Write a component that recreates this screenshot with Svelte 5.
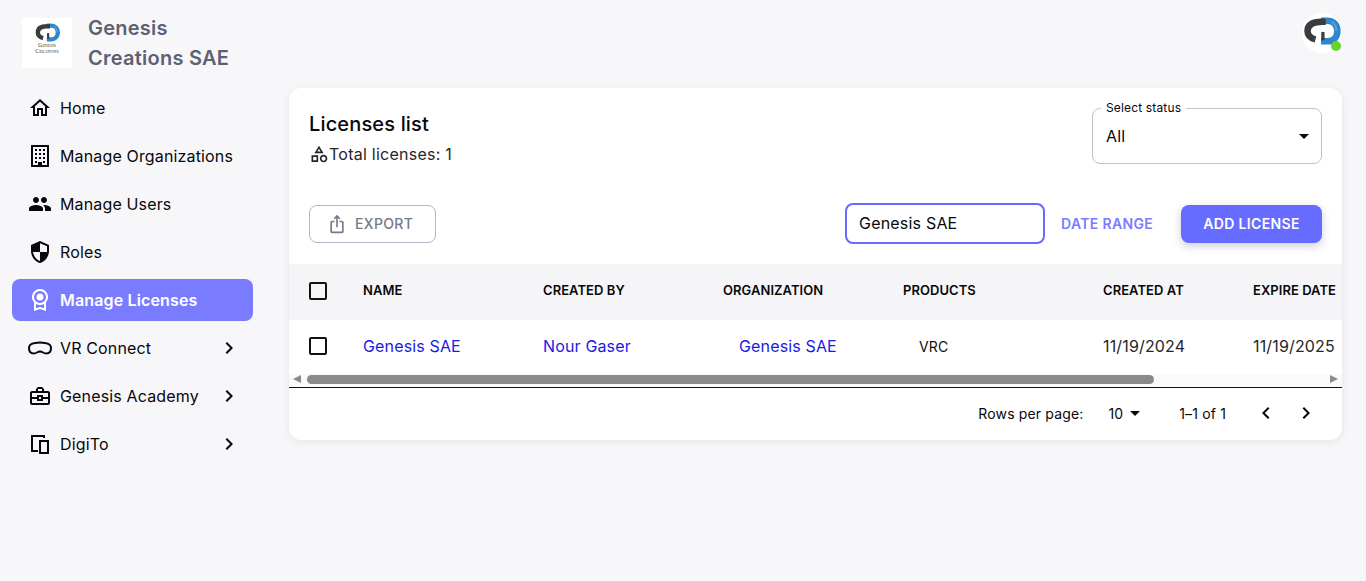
<script>
  const nav = [
    { label: 'Home', icon: 'home' },
    { label: 'Manage Organizations', icon: 'org' },
    { label: 'Manage Users', icon: 'users' },
    { label: 'Roles', icon: 'shield' },
    { label: 'Manage Licenses', icon: 'badge', active: true },
    { label: 'VR Connect', icon: 'vr', more: true },
    { label: 'Genesis Academy', icon: 'case', more: true },
    { label: 'DigiTo', icon: 'devices', more: true },
  ];

  const columns = [
    { label: 'NAME', width: 180 },
    { label: 'CREATED BY', width: 180 },
    { label: 'ORGANIZATION', width: 180 },
    { label: 'PRODUCTS', width: 200 },
    { label: 'CREATED AT', width: 150 },
    { label: 'EXPIRE DATE', width: 150 },
  ];
</script>

{#snippet mark()}
  <g fill="none" stroke-width="7">
    <path d="M19 4 H26 C32.500 4 36.500 9 36.500 15 C36.500 22 32 26 26 26 H19" stroke="#2f86c8" />
    <path d="M30 5 C34 7 35.500 11 35.500 15" stroke="#4a9fdc" stroke-width="2.500" />
    <path d="M24 5 H20 C9 5 4.500 8.500 4.500 15 C4.500 19.500 7 22.500 13 24" stroke="#3a3c40" />
    <path d="M21 16 V25" stroke="#3a3c40" stroke-width="3.500" />
  </g>
{/snippet}

{#snippet icon(name)}
  <svg class="ico" viewBox="0 0 24 24" fill="currentColor" aria-hidden="true">
    {#if name === 'home'}
      <path d="m12 5.69 5 4.5V18h-2v-6H9v6H7v-7.81zM12 3 2 12h3v8h6v-6h2v6h6v-8h3z" />
    {:else if name === 'org'}
      <path fill-rule="evenodd" d="M3 1h18v22H3zM5 3v18h5v-3h4v3h5V3z" />
      <path d="M7 5h2v2H7zM11 5h2v2h-2zM15 5h2v2h-2zM7 9h2v2H7zM11 9h2v2h-2zM15 9h2v2h-2zM7 13h2v2H7zM11 13h2v2h-2zM15 13h2v2h-2zM7 17h2v2H7zM15 17h2v2h-2z" />
    {:else if name === 'users'}
      <path d="M16 11c1.66 0 2.99-1.34 2.99-3S17.66 5 16 5c-1.66 0-3 1.34-3 3s1.34 3 3 3zm-8 0c1.66 0 2.99-1.34 2.99-3S9.66 5 8 5C6.34 5 5 6.34 5 8s1.34 3 3 3zm0 2c-2.33 0-7 1.17-7 3.5V19h14v-2.5c0-2.33-4.67-3.5-7-3.5zm8 0c-.29 0-.62.02-.97.05 1.16.84 1.97 1.97 1.97 3.45V19h6v-2.5c0-2.33-4.67-3.5-7-3.5z" />
    {:else if name === 'shield'}
      <path transform="matrix(-1 0 0 1 24 0)" d="M12 1 3 5v6c0 5.55 3.84 10.74 9 12 5.16-1.26 9-6.45 9-12V5l-9-4zm0 10.99h7c-.53 4.12-3.28 7.79-7 8.94V12H5V6.3l7-3.11v8.8z" />
    {:else if name === 'badge'}
      <path fill-rule="evenodd" d="M12 1a8 8 0 0 1 6 13.3V23l-6-2-6 2v-8.700A8 8 0 0 1 12 1zm0 2a6 6 0 1 0 0 12 6 6 0 0 0 0-12zm0 2.500a3.500 3.500 0 1 1 0 7 3.500 3.500 0 0 1 0-7zM8 16v4.200l4-1.300 4 1.300V16a8 8 0 0 1-8 0z" />
    {:else if name === 'vr'}
      <path fill="none" stroke="currentColor" stroke-width="2" d="M7 7 C10 6.300 14 6.300 17 7 C20.500 7.500 23 9 23 12 C23 15.500 21 17.500 18 17.500 C15.500 17.500 14.500 15.500 12 15.500 C9.500 15.500 8.500 17.500 6 17.500 C3 17.500 1 15.500 1 12 C1 9 3.500 7.500 7 7 Z" />
    {:else if name === 'case'}
      <path d="M20 7h-4V5l-2-2h-4L8 5v2H4c-1.100 0-2 .9-2 2v10c0 1.110.89 2 2 2h16c1.110 0 2-.89 2-2V9c0-1.100-.9-2-2-2zM10 5h4v2h-4V5zM4 9h16v4h-5v-2H9v2H4V9zm9 4v2h-2v-2h2zm7 6H4v-4h5v2h6v-2h5v4z" />
    {:else if name === 'devices'}
      <path d="M4 3h13v3h-2V5H5v13h5v2H3V3z" />
      <path fill-rule="evenodd" d="M11 8h10v14H11zm2 2v10h6V10z" />
    {:else if name === 'chevron'}
      <path d="M10 6 8.590 7.410 13.170 12l-4.580 4.590L10 18l6-6z" />
    {:else if name === 'back'}
      <path d="M15.410 7.410 14 6l-6 6 6 6 1.410-1.410L10.830 12z" />
    {:else if name === 'share'}
      <path d="m16 5-1.420 1.420-1.590-1.590V16h-1.980V4.830L9.420 6.420 8 5l4-4 4 4zm4 5v11c0 1.100-.9 2-2 2H6c-1.110 0-2-.9-2-2V10c0-1.110.89-2 2-2h3v2H6v11h12V10h-3V8h3c1.100 0 2 .89 2 2z" />
    {:else if name === 'category'}
      <path d="m12 2-5.500 9h11L12 2zm0 3.840L13.930 9h-3.870L12 5.840zM17.500 13c-2.490 0-4.500 2.010-4.500 4.500s2.010 4.500 4.500 4.500 4.500-2.010 4.500-4.500-2.010-4.500-4.500-4.500zm0 7c-1.380 0-2.500-1.120-2.500-2.500s1.120-2.500 2.500-2.500 2.500 1.120 2.500 2.500-1.120 2.500-2.500 2.500zM3 21.500h8v-8H3v8zm2-6h4v4H5v-4z" />
    {:else if name === 'caret'}
      <path d="m7 10 5 5 5-5z" />
    {/if}
  </svg>
{/snippet}

<div class="page">
  <aside class="side">
    <div class="brand">
      <div class="logo">
        <svg viewBox="0 0 40 30" class="logo-mark" aria-hidden="true">{@render mark()}</svg>
        <span class="logo-text">Genesis<br />Creations</span>
      </div>
      <div class="brand-name">Genesis Creations SAE</div>
    </div>
    <nav class="nav">
      {#each nav as item}
        <div class="nav-item" class:active={item.active}>
          {@render icon(item.icon)}
          <span class="nav-label">{item.label}</span>
          {#if item.more}
            <span>{@render icon('chevron')}</span>
          {/if}
        </div>
      {/each}
    </nav>
  </aside>

  <div class="main">
    <header class="top">
      <div class="avatar">
        <svg viewBox="0 0 40 30" aria-hidden="true">{@render mark()}</svg>
        <span class="dot"></span>
      </div>
    </header>

    <section class="card">
      <div class="card-head">
        <div>
          <h1>Licenses list</h1>
          <div class="total">{@render icon('category')}<span>Total licenses: 1</span></div>
        </div>
        <fieldset class="select">
          <legend>Select status</legend>
          <span>All</span>
          {@render icon('caret')}
        </fieldset>
      </div>

      <div class="toolbar">
        <button class="export">{@render icon('share')}EXPORT</button>
        <div class="spacer"></div>
        <input class="search" value="Genesis SAE" />
        <button class="range">DATE RANGE</button>
        <button class="add">ADD LICENSE</button>
      </div>

      <div class="table-wrap">
        <table>
          <thead>
            <tr>
              <th class="check-col"><span class="box"></span></th>
              {#each columns as col}
                <th style="width: {col.width}px">{col.label}</th>
              {/each}
            </tr>
          </thead>
          <tbody>
            <tr>
              <td class="check-col"><span class="box"></span></td>
              <td class="link">Genesis SAE</td>
              <td class="link">Nour Gaser</td>
              <td class="link"><span class="inset">Genesis SAE</span></td>
              <td class="small"><span class="inset">VRC</span></td>
              <td>11/19/2024</td>
              <td>11/19/2025</td>
            </tr>
          </tbody>
        </table>
      </div>

      <div class="scrollbar">
        <span class="arrow left"></span>
        <div class="track"><div class="thumb"></div></div>
        <span class="arrow right"></span>
      </div>

      <div class="pager">
        <span>Rows per page:</span>
        <span class="rows">10{@render icon('caret')}</span>
        <span class="count">1–1 of 1</span>
        <span class="page-btn">{@render icon('back')}</span>
        <span class="page-btn">{@render icon('chevron')}</span>
      </div>
    </section>
  </div>
</div>

<style>
  :global(body) {
    margin: 0;
    background: #f7f7f9;
    font-family: Inter, "Liberation Sans", sans-serif;
    color: #08080c;
    letter-spacing: 0.15px;
  }

  .page {
    display: flex;
    height: 581px;
    overflow: hidden;
  }

  .ico {
    width: 24px;
    height: 24px;
    flex: none;
    display: block;
  }

  /* sidebar */
  .side {
    width: 265px;
    flex: none;
    padding: 13px 12px 0;
    box-sizing: border-box;
  }

  .brand {
    display: flex;
    gap: 16px;
    padding-left: 10px;
    height: 74px;
  }

  .logo {
    width: 50px;
    height: 50px;
    margin-top: 5px;
    background: #fff;
    display: flex;
    flex-direction: column;
    align-items: center;
    padding-top: 5px;
    box-sizing: border-box;
    flex: none;
  }

  .logo-mark {
    width: 25px;
    height: 19px;
    flex: none;
  }

  .logo-text {
    font-family: "Liberation Serif", serif;
    font-variant: small-caps;
    font-size: 6px;
    line-height: 6px;
    letter-spacing: 0;
    text-align: center;
    color: #333;
  }

  .brand-name {
    font-size: 20px;
    font-weight: 600;
    line-height: 30px;
    letter-spacing: 0.25px;
    color: #5f5f73;
    width: 165px;
  }

  .nav {
    display: flex;
    flex-direction: column;
    gap: 6px;
  }

  .nav-item {
    height: 42px;
    border-radius: 8px;
    display: flex;
    align-items: center;
    padding: 0 12px 0 16px;
    gap: 8px;
    font-size: 16px;
  }

  .nav-item.active {
    background: #7a7cff;
    color: #fff;
    font-weight: 600;
  }

  .nav-label {
    flex: 1;
    white-space: nowrap;
  }

  /* main column */
  .main {
    flex: 1;
    min-width: 0;
    padding: 0 24px;
  }

  .top {
    height: 88px;
    display: flex;
    justify-content: flex-end;
  }

  .avatar {
    position: relative;
    width: 40px;
    height: 40px;
    margin-top: 13px;
    background: #fff;
    border-radius: 50%;
    display: flex;
    justify-content: center;
    padding-top: 4px;
    box-sizing: border-box;
  }

  .avatar svg {
    width: 38px;
    height: 28px;
  }

  .dot {
    position: absolute;
    right: 1px;
    bottom: 2px;
    width: 10px;
    height: 10px;
    border-radius: 50%;
    background: #67d32c;
  }

  .card {
    background: #fff;
    border-radius: 12px;
    box-shadow: 0 2px 8px rgba(30, 30, 60, 0.08);
    height: 352px;
    overflow: hidden;
  }

  .card-head {
    display: flex;
    justify-content: space-between;
    padding: 20px 20px 0;
    height: 95px;
    box-sizing: border-box;
  }

  h1 {
    margin: 0;
    font-size: 20px;
    font-weight: 500;
    line-height: 32px;
  }

  .total {
    display: flex;
    align-items: center;
    font-size: 16px;
    line-height: 24px;
    letter-spacing: 0.25px;
    margin-top: 2px;
    color: #26262c;
  }

  .total .ico {
    width: 20px;
    height: 20px;
  }

  .select {
    margin: -6px 0 0;
    width: 230px;
    height: 62px;
    box-sizing: border-box;
    border: 1px solid #c4c4c8;
    border-radius: 8px;
    padding: 0 13px;
    display: flex;
    align-items: center;
    justify-content: space-between;
    font-size: 16px;
    min-width: 0;
  }

  legend {
    font-size: 12px;
    line-height: 12px;
    padding: 0 5px;
    margin-left: -5px;
  }

  .select .ico {
    margin-right: -8px;
    margin-top: -5px;
  }

  .select span {
    margin-top: -6px;
  }

  .toolbar {
    display: flex;
    align-items: center;
    padding: 0 20px;
    height: 41px;
    margin-top: 20px;
  }

  .spacer {
    flex: 1;
  }

  button {
    font-family: inherit;
    font-size: 14px;
    font-weight: 600;
    height: 38px;
    border-radius: 8px;
    cursor: pointer;
    letter-spacing: 0.35px;
    white-space: nowrap;
  }

  .export {
    width: 127px;
    background: #fff;
    border: 1px solid #b3b6c4;
    color: #757989;
    font-weight: 500;
    display: flex;
    align-items: center;
    gap: 8px;
    padding: 0 0 0 17px;
  }

  .export .ico {
    width: 20px;
    height: 20px;
  }

  .search {
    width: 200px;
    height: 41px;
    box-sizing: border-box;
    border: 2px solid #666cff;
    border-radius: 8px;
    padding: 0 12px 1px;
    font: inherit;
    font-size: 16px;
    letter-spacing: 0.2px;
    color: #08080c;
    outline: none;
  }

  .range {
    background: none;
    border: 0;
    color: #7a7cff;
    margin-left: 16px;
    padding: 0;
    width: 92px;
  }

  .add {
    margin-left: 28px;
    width: 141px;
    background: #666cff;
    border: 0;
    color: #fff;
    box-shadow: 0 3px 8px rgba(60, 60, 120, 0.25);
  }

  /* table */
  .table-wrap {
    margin-top: 20px;
    overflow: hidden;
  }

  table {
    border-collapse: collapse;
    table-layout: fixed;
    width: 1094px;
  }

  th {
    background: #f5f5f7;
    height: 56px;
    padding: 0 0 4px 20px;
    text-align: left;
    font-size: 13px;
    font-weight: 600;
    letter-spacing: 0.05px;
    white-space: nowrap;
    box-sizing: border-box;
  }

  td {
    height: 54px;
    padding: 0 0 2px 20px;
    font-size: 16px;
    white-space: nowrap;
    color: #26262c;
    box-sizing: border-box;
  }

  th.check-col,
  td.check-col {
    width: 54px;
    padding: 0 0 2px 20px;
  }

  .box {
    display: block;
    width: 14px;
    height: 14px;
    border: 2px solid #111;
    border-radius: 2px;
  }

  .link {
    color: #1a1ae6;
  }

  .inset {
    padding-left: 16px;
  }

  .small {
    font-size: 14px;
    color: #111;
  }

  .scrollbar {
    height: 13px;
    display: flex;
    align-items: flex-start;
    padding-top: 1px;
    box-sizing: border-box;
    background: #fafafa;
  }

  .arrow {
    width: 0;
    height: 0;
    border-top: 4.5px solid transparent;
    border-bottom: 4.5px solid transparent;
    flex: none;
  }

  .arrow.left {
    border-right: 8px solid #8a8a8a;
    margin-left: 4px;
  }

  .arrow.right {
    border-left: 8px solid #8a8a8a;
    margin-right: 4px;
  }

  .track {
    flex: 1;
    padding: 0 6px;
    min-width: 0;
  }

  .thumb {
    width: 847px;
    height: 9px;
    border-radius: 5px;
    background: #8a8a8a;
  }

  .pager {
    border-top: 1px solid #111;
    height: 50px;
    display: flex;
    align-items: center;
    justify-content: flex-end;
    font-size: 14px;
    padding-right: 24px;
  }

  .rows {
    display: flex;
    align-items: center;
    margin: 0 32px 0 25px;
  }

  .page-btn {
    margin-left: 16px;
    display: block;
  }

  .count + .page-btn {
    margin-left: 28px;
  }
</style>
